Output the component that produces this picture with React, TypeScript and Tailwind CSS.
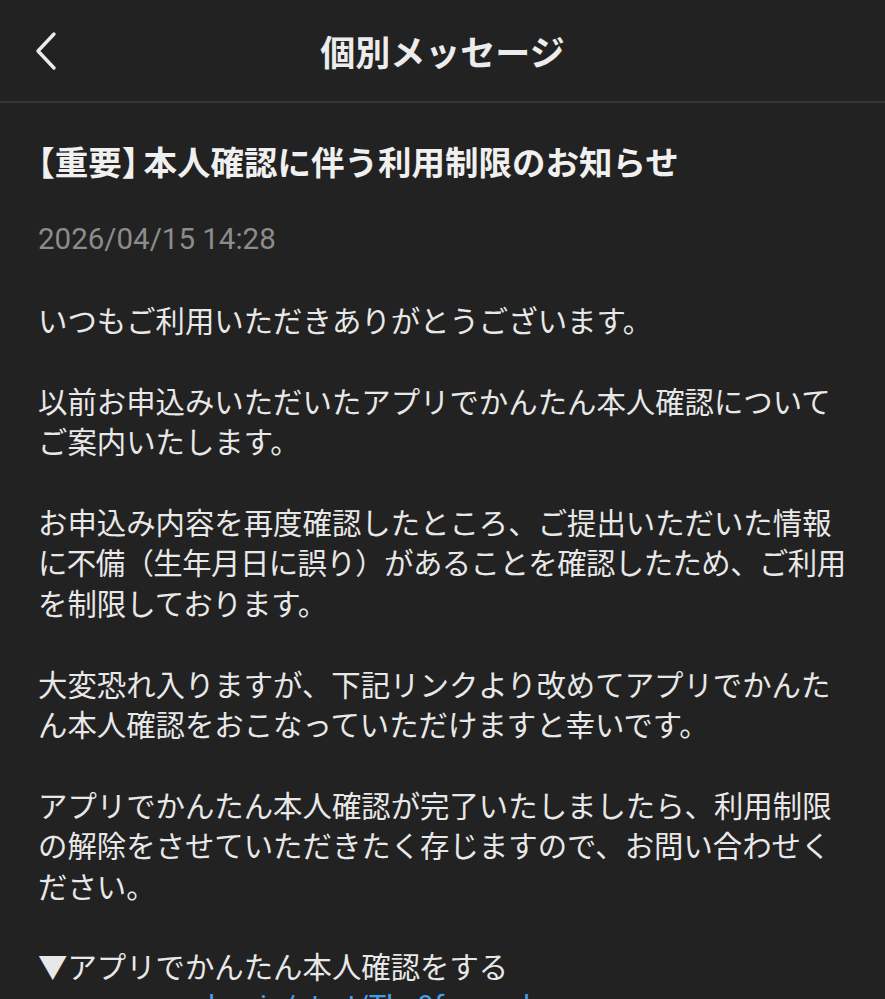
import React from "react";

const JP = { fontFamily: '"Noto Sans CJK JP", "Noto Sans", sans-serif' };

const paragraphs: string[][] = [
  ["いつもご利用いただきありがとうございます。"],
  ["以前お申込みいただいたアプリでかんたん本人確認について", "ご案内いたします。"],
  [
    "お申込み内容を再度確認したところ、ご提出いただいた情報",
    "に不備（生年月日に誤り）があることを確認したため、ご利用",
    "を制限しております。",
  ],
  ["大変恐れ入りますが、下記リンクより改めてアプリでかんた", "ん本人確認をおこなっていただけますと幸いです。"],
  [
    "アプリでかんたん本人確認が完了いたしましたら、利用制限",
    "の解除をさせていただきたく存じますので、お問い合わせく",
    "ださい。",
  ],
];

export default function App() {
  return (
    <div className="min-h-[999px] w-full bg-[#222222] text-[#ececec]" style={JP}>
      <header className="relative flex h-[103px] items-center justify-center border-b-2 border-[#363636]">
        <button className="absolute left-[30px] top-[31px] flex h-[40px] w-[30px] items-center justify-center">
          <svg width="26" height="40" viewBox="0 0 26 40" fill="none">
            <path d="M22 3 L6 20 L22 37" stroke="#ececec" strokeWidth="3.4" strokeLinecap="round" strokeLinejoin="round" />
          </svg>
        </button>
        <h1 className="text-[35px] font-bold leading-none text-[#ececec]">個別メッセージ</h1>
      </header>

      <main className="px-[38px] pt-[38px]">
        <h2 className="whitespace-nowrap text-[33.5px] font-bold leading-[40px] text-[#f0f0f0]">
          <span className="[font-feature-settings:'halt']">【</span>重要<span className="pr-[5px] [font-feature-settings:'halt']">】</span>本人確認に伴う利用制限のお知らせ
        </h2>

        <div
          className="mt-[38px] text-[29.5px] leading-[40px] text-[#8c8c8c]"
          style={{ fontFamily: 'Roboto, "Liberation Sans", sans-serif' }}
        >
          2026/04/15 14:28
        </div>

        <div className="mt-[40px] flex flex-col gap-[40.4px] text-[29.4px] leading-[40.4px] text-[#e8e8e8]">
          {paragraphs.map((lines, i) => (
            <p key={i}>
              {lines.map((l, j) => (
                <span
                  key={j}
                  className={
                    l.startsWith("に不備")
                      ? "block whitespace-nowrap tracking-[-0.55px]"
                      : "block whitespace-nowrap"
                  }
                >
                  {l}
                </span>
              ))}
            </p>
          ))}
          <p>
            <span className="block whitespace-nowrap">▼アプリでかんたん本人確認をする</span>
            <a
              className="block whitespace-nowrap text-[#3f9ee6]"
              style={{ fontFamily: 'Roboto, "Liberation Sans", sans-serif' }}
            >
              www.anmn-ekyc.jp/start/Tkn9fswmak
            </a>
          </p>
        </div>
      </main>
    </div>
  );
}
